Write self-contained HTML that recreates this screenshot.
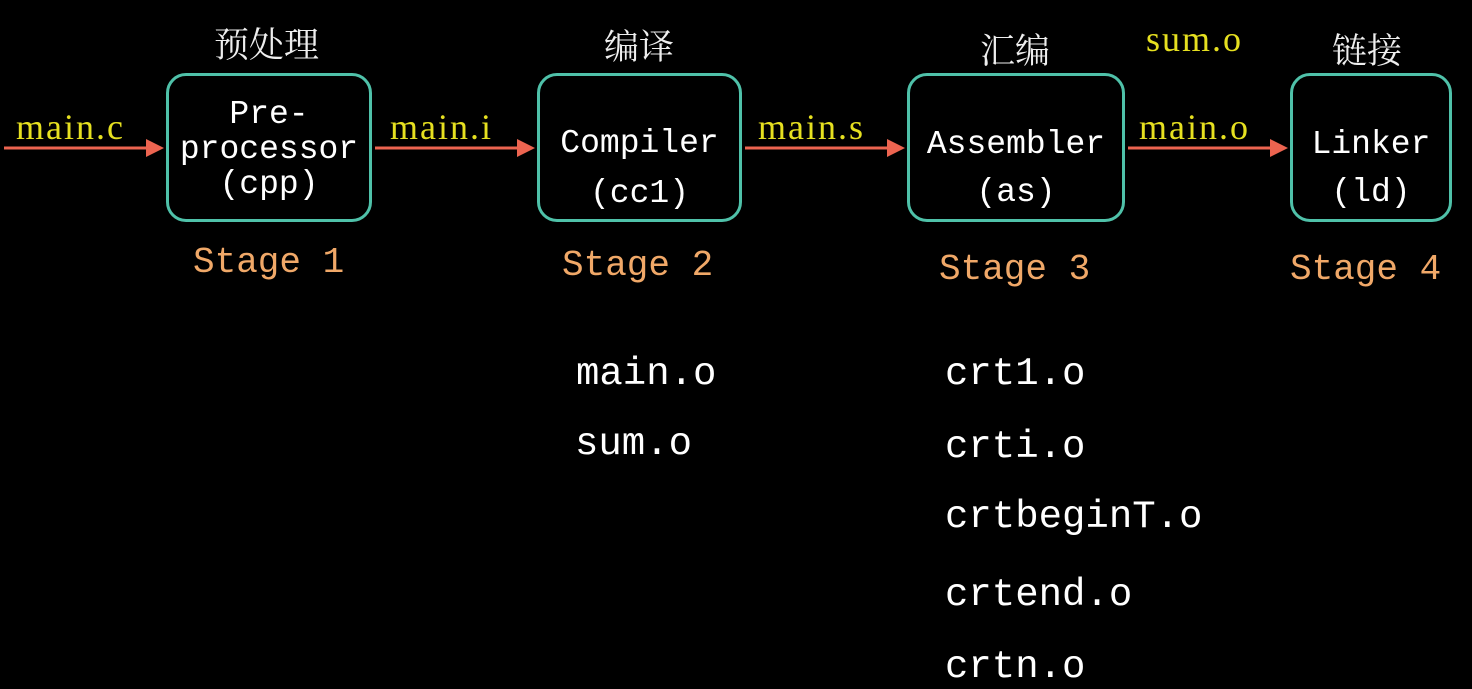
<!DOCTYPE html>
<html><head><meta charset="utf-8"><style>
body{margin:0;width:1472px;height:689px;background:#000;overflow:hidden;position:relative}
div{position:absolute;white-space:pre;line-height:1}
.m{font-family:"Liberation Mono",monospace;color:#fff}
.b{font-size:33px;text-align:center}
.st{font-family:"Liberation Mono",monospace;font-size:36px;color:#f0a868}
.y{font-family:"Liberation Serif",serif;font-size:36px;letter-spacing:2px;color:#e6e020}
.cn{font-family:"Noto Serif CJK SC","Noto Sans CJK SC",sans-serif;font-size:35px;color:#eee}
.w{font-size:39px}
.box{border:3px solid #4fc1a9;border-radius:20px;box-sizing:border-box}
</style></head><body>
<svg width="1472" height="689" style="position:absolute;left:0;top:0">
<g stroke="#ec6450" stroke-width="3"><line x1="4" y1="148" x2="150" y2="148"/><line x1="375" y1="148" x2="520" y2="148"/><line x1="745" y1="148" x2="890" y2="148"/><line x1="1128" y1="148" x2="1272" y2="148"/></g>
<g fill="#ec6450"><polygon points="164,148 146,139 146,157"/><polygon points="535,148 517,139 517,157"/><polygon points="905,148 887,139 887,157"/><polygon points="1288,148 1270,139 1270,157"/></g>
</svg>
<div class="box" style="left:166px;top:73px;width:206px;height:149px"></div>
<div class="box" style="left:537px;top:73px;width:205px;height:149px"></div>
<div class="box" style="left:907px;top:73px;width:218px;height:149px"></div>
<div class="box" style="left:1290px;top:73px;width:162px;height:149px"></div>

<div class="m b" style="left:166px;width:206px;top:97px;line-height:35px">Pre-
processor
(cpp)</div>
<div class="m b" style="left:537px;width:205px;top:119px;line-height:50px">Compiler
(cc1)</div>
<div class="m b" style="left:907px;width:218px;top:121px;line-height:48px">Assembler
(as)</div>
<div class="m b" style="left:1290px;width:162px;top:121px;line-height:48px">Linker
(ld)</div>

<div class="cn" style="left:214px;top:26px">预处理</div>
<div class="cn" style="left:604px;top:28px">编译</div>
<div class="cn" style="left:980px;top:32px">汇编</div>
<div class="cn" style="left:1332px;top:32px">链接</div>

<div class="y" style="left:16px;top:109px">main.c</div>
<div class="y" style="left:390px;top:109px">main.i</div>
<div class="y" style="left:758px;top:109px">main.s</div>
<div class="y" style="left:1139px;top:109px">main.o</div>
<div class="y" style="left:1146px;top:21px">sum.o</div>

<div class="st" style="left:193px;top:245px">Stage 1</div>
<div class="st" style="left:562px;top:248px">Stage 2</div>
<div class="st" style="left:939px;top:252px">Stage 3</div>
<div class="st" style="left:1290px;top:252px">Stage 4</div>

<div class="m w" style="left:576px;top:355px">main.o</div>
<div class="m w" style="left:575px;top:425px">sum.o</div>
<div class="m w" style="left:945px;top:355px">crt1.o</div>
<div class="m w" style="left:945px;top:428px">crti.o</div>
<div class="m w" style="left:945px;top:498px">crtbeginT.o</div>
<div class="m w" style="left:945px;top:576px">crtend.o</div>
<div class="m w" style="left:945px;top:648px">crtn.o</div>
</body></html>
